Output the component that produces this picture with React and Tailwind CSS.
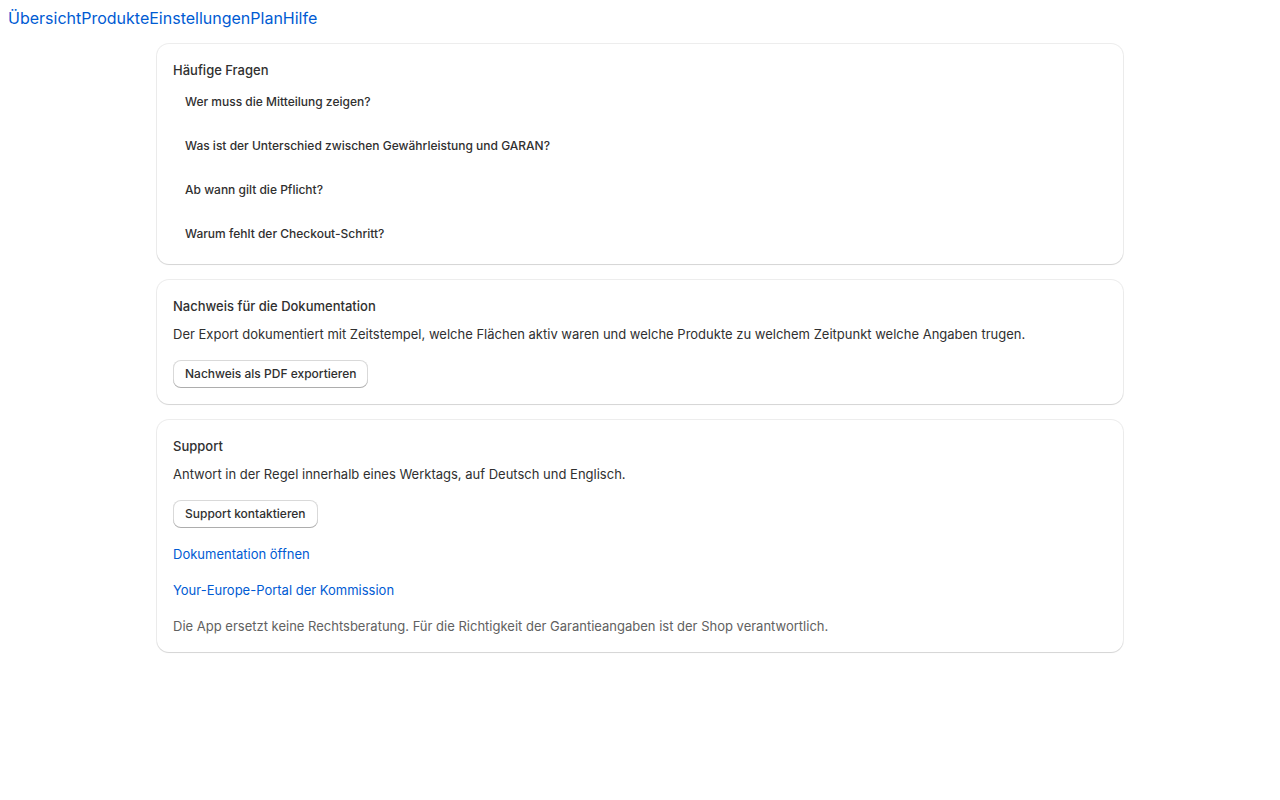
const faqs = [
  'Wer muss die Mitteilung zeigen?',
  'Was ist der Unterschied zwischen Gewährleistung und GARAN?',
  'Ab wann gilt die Pflicht?',
  'Warum fehlt der Checkout-Schritt?',
]

const navItems = ['Übersicht', 'Produkte', 'Einstellungen', 'Plan', 'Hilfe']

function Card({ title, children }) {
  return (
    <section className="rounded-xl bg-white p-4 shadow-[0_0_0_1px_rgba(0,0,0,0.07),0_1px_1px_0_rgba(0,0,0,0.1)]">
      <h2 className="text-[13px] leading-5 font-[550] text-[#303030]">{title}</h2>
      {children}
    </section>
  )
}

function Button({ children }) {
  return (
    <button
      type="button"
      className="h-7 rounded-lg bg-white px-3 text-xs font-[550] text-[#303030] shadow-[inset_0_0_0_1px_rgba(0,0,0,0.15),inset_0_-1px_0_0_rgba(0,0,0,0.2)]"
    >
      {children}
    </button>
  )
}

export default function App() {
  return (
    <div className="min-h-screen bg-white font-['Inter','Liberation_Sans',sans-serif] text-[#303030]">
      <nav className="flex p-2 text-base leading-5 text-[#005bd3]">
        {navItems.map((n) => (
          <a key={n} href="#">
            {n}
          </a>
        ))}
      </nav>
      <main className="mx-auto mt-2 flex max-w-[998px] flex-col gap-4 px-4">
        <Card title="Häufige Fragen">
          <ul className="mt-2 flex flex-col gap-4">
            {faqs.map((q) => (
              <li key={q} className="px-3 py-1.5 text-xs leading-4 font-[550] text-[#303030]">
                {q}
              </li>
            ))}
          </ul>
        </Card>

        <Card title="Nachweis für die Dokumentation">
          <p className="mt-2 text-[13px] leading-5">
            Der Export dokumentiert mit Zeitstempel, welche Flächen aktiv waren und welche Produkte zu welchem
            Zeitpunkt welche Angaben trugen.
          </p>
          <div className="mt-4">
            <Button>Nachweis als PDF exportieren</Button>
          </div>
        </Card>

        <Card title="Support">
          <p className="mt-2 text-[13px] leading-5">Antwort in der Regel innerhalb eines Werktags, auf Deutsch und Englisch.</p>
          <div className="mt-4">
            <Button>Support kontaktieren</Button>
          </div>
          <div className="mt-4 flex flex-col gap-4 text-[13px] leading-5">
            <a href="#" className="self-start text-[#005bd3]">
              Dokumentation öffnen
            </a>
            <a href="#" className="self-start text-[#005bd3]">
              Your-Europe-Portal der Kommission
            </a>
            <p className="text-[#616161]">
              Die App ersetzt keine Rechtsberatung. Für die Richtigkeit der Garantieangaben ist der Shop verantwortlich.
            </p>
          </div>
        </Card>
      </main>
    </div>
  )
}
